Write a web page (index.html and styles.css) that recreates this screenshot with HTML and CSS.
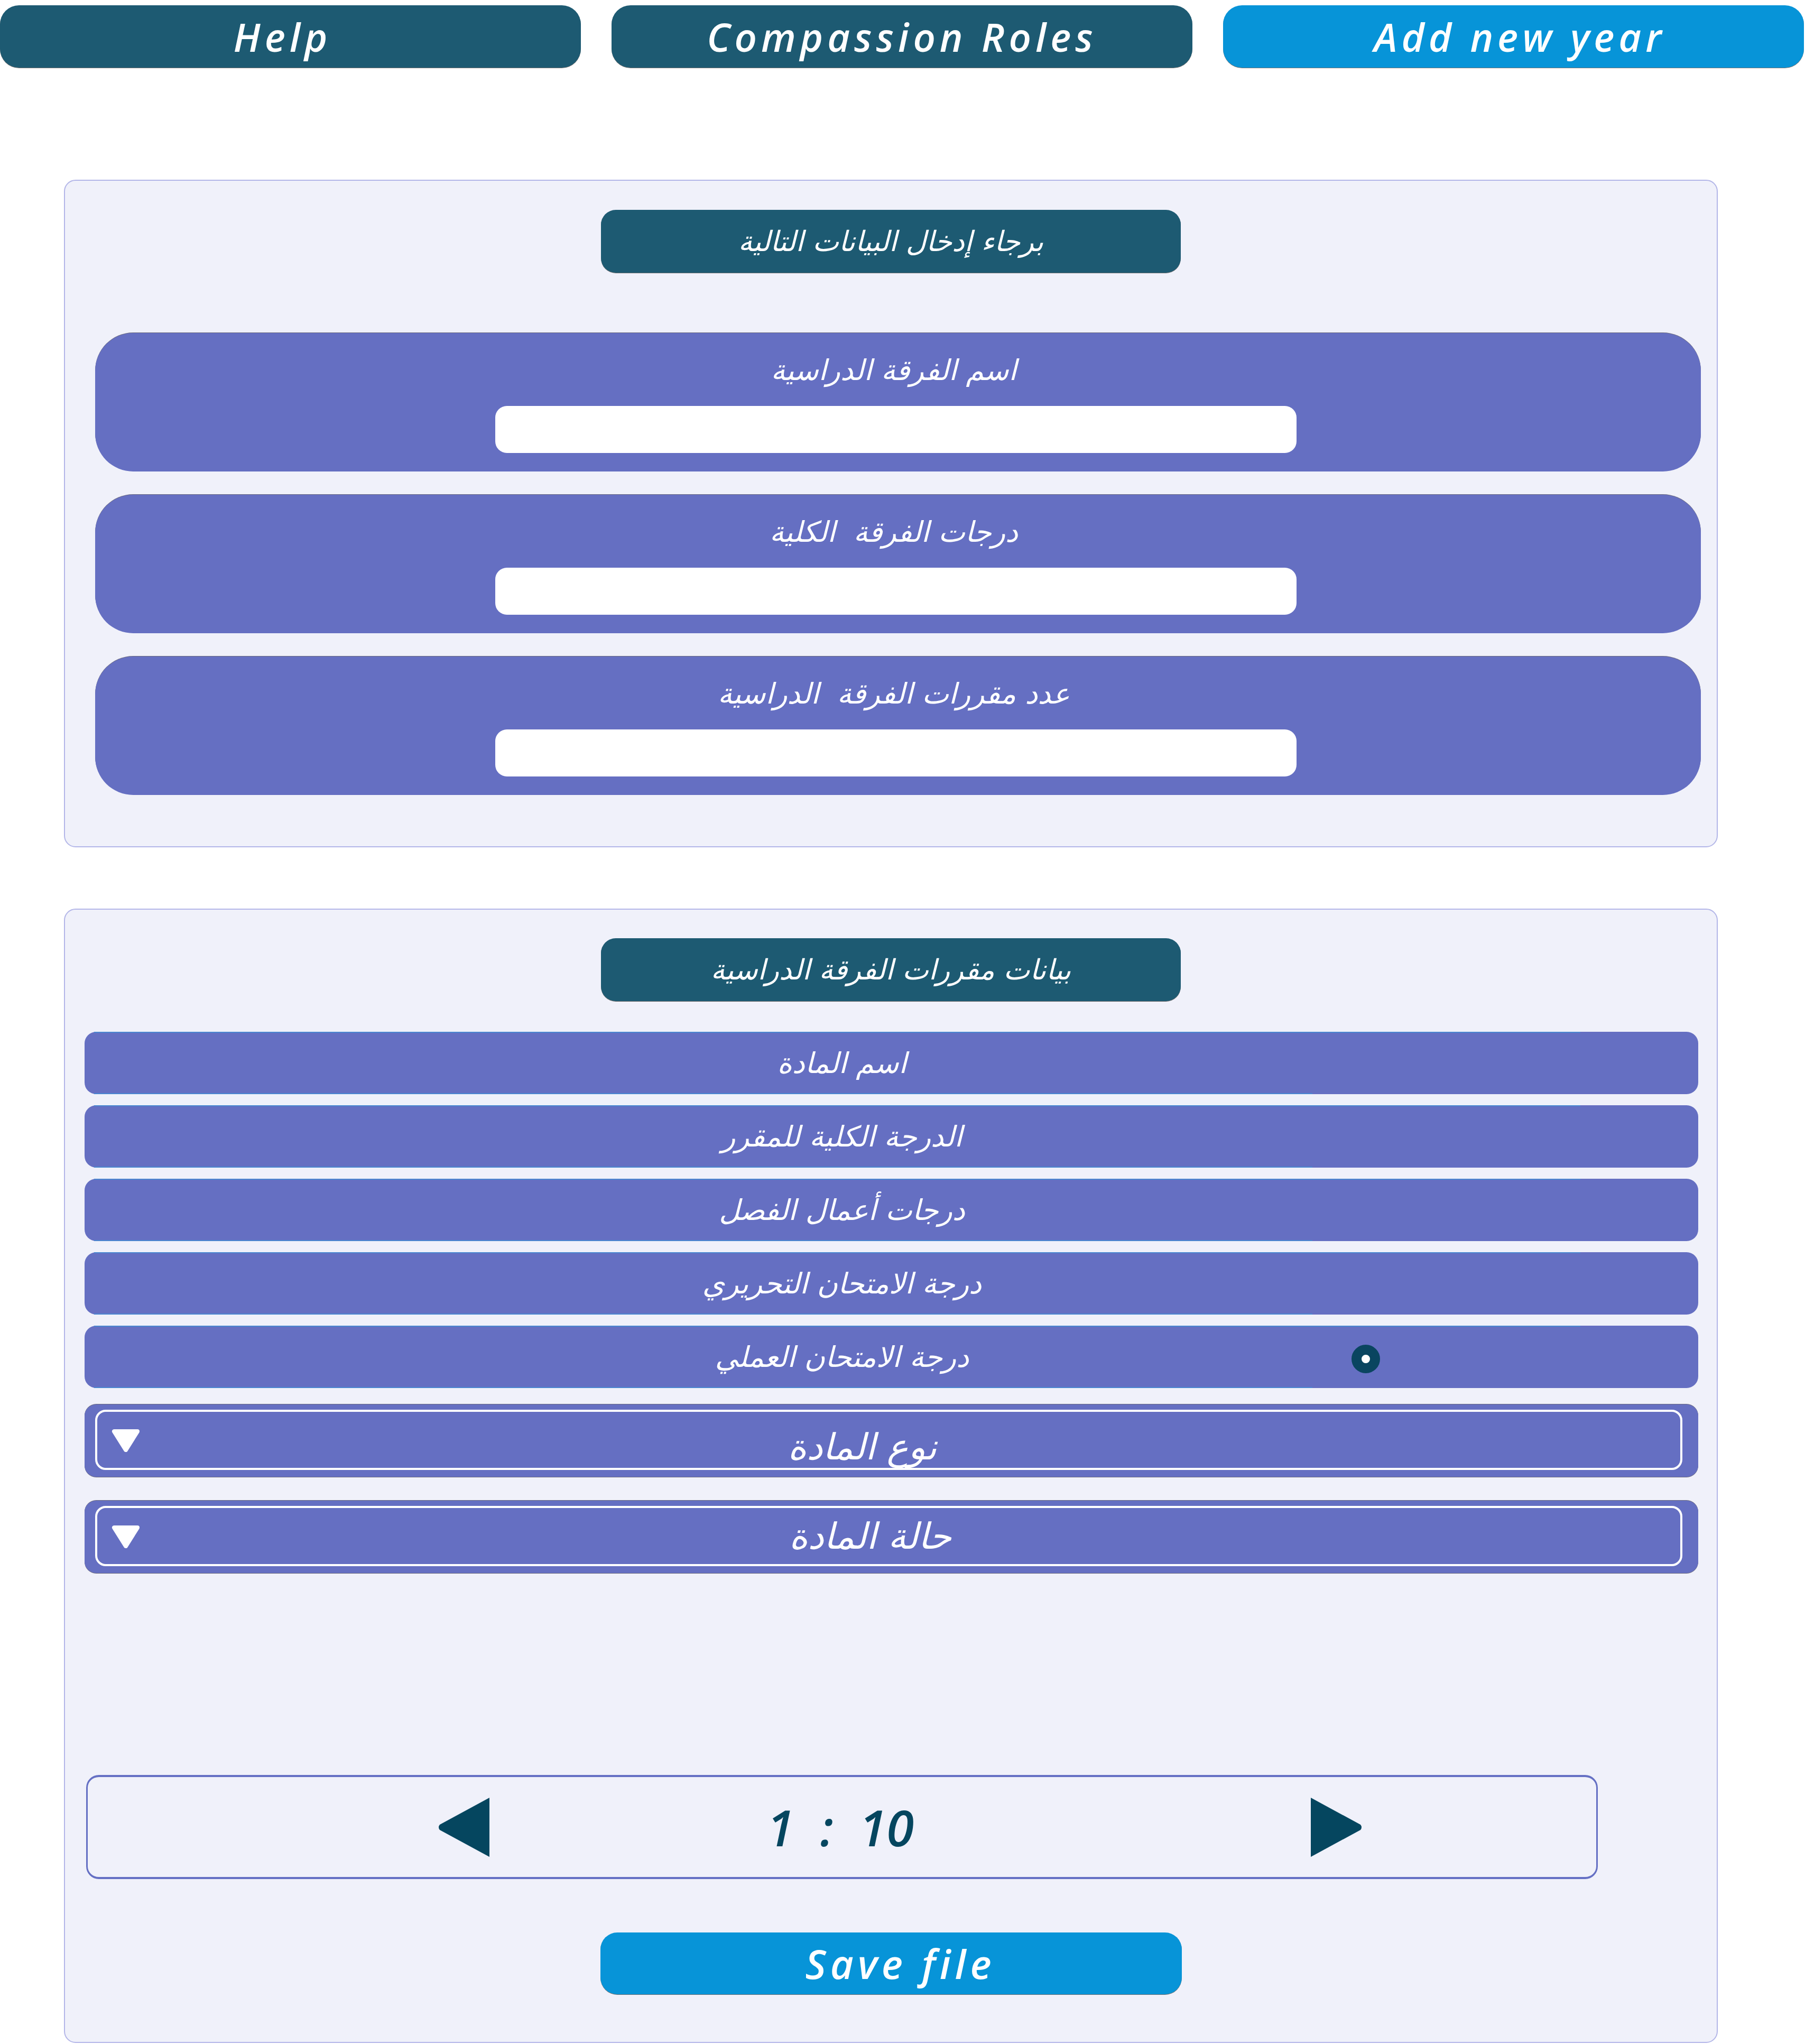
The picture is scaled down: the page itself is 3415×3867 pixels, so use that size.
FILE: index.html
```html
<!DOCTYPE html>
<html lang="ar">
<head>
<meta charset="utf-8">
<title>Add new year</title>
<link rel="stylesheet" href="styles.css">
</head>
<body>
<div class="page">
  <nav class="topbar">
    <button class="top-btn dark">Help</button>
    <button class="top-btn dark">Compassion Roles</button>
    <button class="top-btn blue">Add new year</button>
  </nav>

  <section class="panel panel-first">
    <div class="pill" dir="rtl">برجاء إدخال البيانات التالية</div>
    <div class="fields">
      <div class="field">
        <div class="field-label" dir="rtl">اسم الفرقة الدراسية</div>
        <div class="field-input"></div>
      </div>
      <div class="field">
        <div class="field-label" dir="rtl">درجات الفرقة&nbsp; الكلية</div>
        <div class="field-input"></div>
      </div>
      <div class="field">
        <div class="field-label" dir="rtl">عدد مقررات الفرقة&nbsp; الدراسية</div>
        <div class="field-input"></div>
      </div>
    </div>
  </section>

  <section class="panel panel-second">
    <div class="pill" dir="rtl">بيانات مقررات الفرقة الدراسية</div>
    <div class="rows">
      <div class="row"><span class="row-label" dir="rtl">اسم المادة</span></div>
      <div class="row"><span class="row-label" dir="rtl">الدرجة الكلية للمقرر</span></div>
      <div class="row"><span class="row-label" dir="rtl">درجات أعمال الفصل</span></div>
      <div class="row"><span class="row-label" dir="rtl">درجة الامتحان التحريري</span></div>
      <div class="row"><span class="row-label" dir="rtl">درجة الامتحان العملي</span><span class="radio"></span></div>
    </div>
    <div class="select select-one">
      <div class="select-inner">
        <svg class="caret" viewBox="0 0 56 44" width="56" height="44"><path d="M6 5 L50 5 L28 40 Z" fill="#ffffff" stroke="#ffffff" stroke-width="8" stroke-linejoin="round"/></svg>
        <span class="select-text" dir="rtl">نوع المادة</span>
      </div>
    </div>
    <div class="select select-two">
      <div class="select-inner">
        <svg class="caret" viewBox="0 0 56 44" width="56" height="44"><path d="M6 5 L50 5 L28 40 Z" fill="#ffffff" stroke="#ffffff" stroke-width="8" stroke-linejoin="round"/></svg>
        <span class="select-text" dir="rtl">حالة المادة</span>
      </div>
    </div>
    <div class="pager">
      <svg class="arrow" viewBox="0 0 100 114" width="100" height="114"><path d="M98 1 L98 113 L4 62 Q0 57 4 52 Z" fill="#05465f"/></svg>
      <span class="pager-text">1&nbsp; :&nbsp; 10</span>
      <svg class="arrow" viewBox="0 0 100 114" width="100" height="114"><path d="M2 1 L2 113 L96 62 Q100 57 96 52 Z" fill="#05465f"/></svg>
    </div>
    <button class="save-btn">Save file</button>
  </section>
</div>
</body>
</html>
```

FILE: styles.css
```css
html, body {
  margin: 0;
  padding: 0;
  background: #ffffff;
}

.page {
  width: 3415px;
  display: flex;
  flex-direction: column;
}

.topbar {
  display: flex;
  gap: 58px;
  padding-top: 10px;
}

.top-btn {
  width: 1099px;
  height: 118px;
  border: none;
  border-radius: 36px;
  color: #ffffff;
  font-family: "Open Sans", "DejaVu Sans", sans-serif;
  font-style: italic;
  font-weight: 600;
  font-size: 74px;
  letter-spacing: 8px;
  display: flex;
  align-items: center;
  justify-content: center;
  padding: 0;
  box-shadow: 0 1px 0 #707070;
}

.top-btn.dark { background: #1d5a72; }
.top-btn.blue { background: #0794d8; padding-left: 24px; }
.top-btn:first-child { padding-right: 30px; }

.panel {
  margin-left: 121px;
  width: 3129px;
  box-sizing: border-box;
  background: #f0f1fa;
  border: 2px solid #b3b6e8;
  border-radius: 22px;
  display: flex;
  flex-direction: column;
  align-items: center;
}

.panel-first {
  margin-top: 212px;
  height: 1263px;
  padding-top: 55px;
}

.panel-second {
  margin-top: 116px;
  height: 2146px;
  padding-top: 54px;
}

.pill {
  width: 1097px;
  height: 119px;
  box-sizing: border-box;
  background: #1d5a72;
  border-radius: 28px;
  color: #ffffff;
  font-family: "DejaVu Sans", "Noto Sans", sans-serif;
  font-style: italic;
  font-size: 53px;
  display: flex;
  align-items: center;
  justify-content: center;
  box-shadow: 0 1px 0 #707070;
}

.fields {
  align-self: flex-start;
  margin-left: 57px;
  margin-top: 114px;
  display: flex;
  flex-direction: column;
  gap: 44px;
}

.field {
  width: 3038px;
  height: 262px;
  background: #656fc2;
  border-radius: 72px;
  display: flex;
  flex-direction: column;
  align-items: center;
  box-shadow: 0 -1px 0 #6a6a80;
}

.field-label {
  margin-top: 40px;
  height: 62px;
  color: #ffffff;
  font-family: "DejaVu Sans", "Noto Sans", sans-serif;
  font-style: italic;
  font-size: 54px;
  line-height: 62px;
  transform: translateX(-8px);
}

.field-input {
  margin-top: 36px;
  width: 1516px;
  height: 89px;
  background: #ffffff;
  border-radius: 22px;
  transform: translateX(-4px);
}

.rows {
  align-self: flex-start;
  margin-left: 37px;
  margin-top: 58px;
  display: flex;
  flex-direction: column;
  gap: 21px;
}

.row {
  position: relative;
  width: 3053px;
  height: 118px;
  background: #656fc2;
  border-radius: 22px;
  display: flex;
  align-items: center;
}

.row::before {
  content: "";
  position: absolute;
  left: 18px;
  top: 0;
  width: 2812px;
  height: 2px;
  background: #4a86d0;
}

.row::after {
  content: "";
  position: absolute;
  left: 18px;
  bottom: 0;
  width: 2305px;
  height: 2px;
  background: #4a86d0;
}

.row-label {
  width: 2866px;
  text-align: center;
  color: #ffffff;
  font-family: "DejaVu Sans", "Noto Sans", sans-serif;
  font-style: italic;
  font-size: 54px;
}

.radio {
  position: absolute;
  left: 2397px;
  top: 36px;
  width: 54px;
  height: 54px;
  box-sizing: border-box;
  border-radius: 50%;
  background: #ffffff;
  border: 19px solid #0a4560;
}

.select {
  align-self: flex-start;
  margin-left: 37px;
  width: 3053px;
  height: 137px;
  box-sizing: border-box;
  background: #656fc2;
  border-radius: 22px;
  padding: 10px 30px 13px 20px;
  box-shadow: 0 -1px 0 #6a6a80, 0 1px 0 #6a6a80;
}

.select-one { margin-top: 31px; }
.select-two { margin-top: 45px; }

.select-inner {
  height: 100%;
  box-sizing: border-box;
  border: 4px solid #ffffff;
  border-radius: 20px;
  display: flex;
  align-items: center;
  position: relative;
}

.caret {
  position: absolute;
  left: 26px;
  top: 32px;
}

.select-text {
  width: 100%;
  text-align: center;
  color: #ffffff;
  font-family: "DejaVu Sans", "Noto Sans", sans-serif;
  font-style: italic;
  font-size: 68px;
  padding-top: 26px;
  transform: translateX(-50px);
}

.select-two .select-text {
  padding-top: 0;
  transform: translateX(-35px);
}

.pager {
  align-self: flex-start;
  margin-left: 40px;
  margin-top: 382px;
  width: 2860px;
  height: 197px;
  box-sizing: border-box;
  border: 3px solid #6570c4;
  border-top-width: 4px;
  border-bottom-width: 4px;
  border-radius: 24px;
  display: flex;
  align-items: center;
  padding-left: 662px;
}

.pager-text {
  width: 1550px;
  box-sizing: border-box;
  padding-right: 226px;
  text-align: center;
  color: #05465f;
  font-family: "Open Sans", "DejaVu Sans", sans-serif;
  font-style: italic;
  font-weight: 600;
  font-size: 94px;
  letter-spacing: 0;
}

.save-btn {
  margin-top: 101px;
  width: 1100px;
  height: 117px;
  border: none;
  border-radius: 32px;
  background: #0794d8;
  color: #ffffff;
  font-family: "Open Sans", "DejaVu Sans", sans-serif;
  font-style: italic;
  font-weight: 600;
  font-size: 76px;
  letter-spacing: 8px;
  padding: 0 0 0 36px;
  display: flex;
  align-items: center;
  justify-content: center;
  box-shadow: 0 1px 0 #707070;
}
```
